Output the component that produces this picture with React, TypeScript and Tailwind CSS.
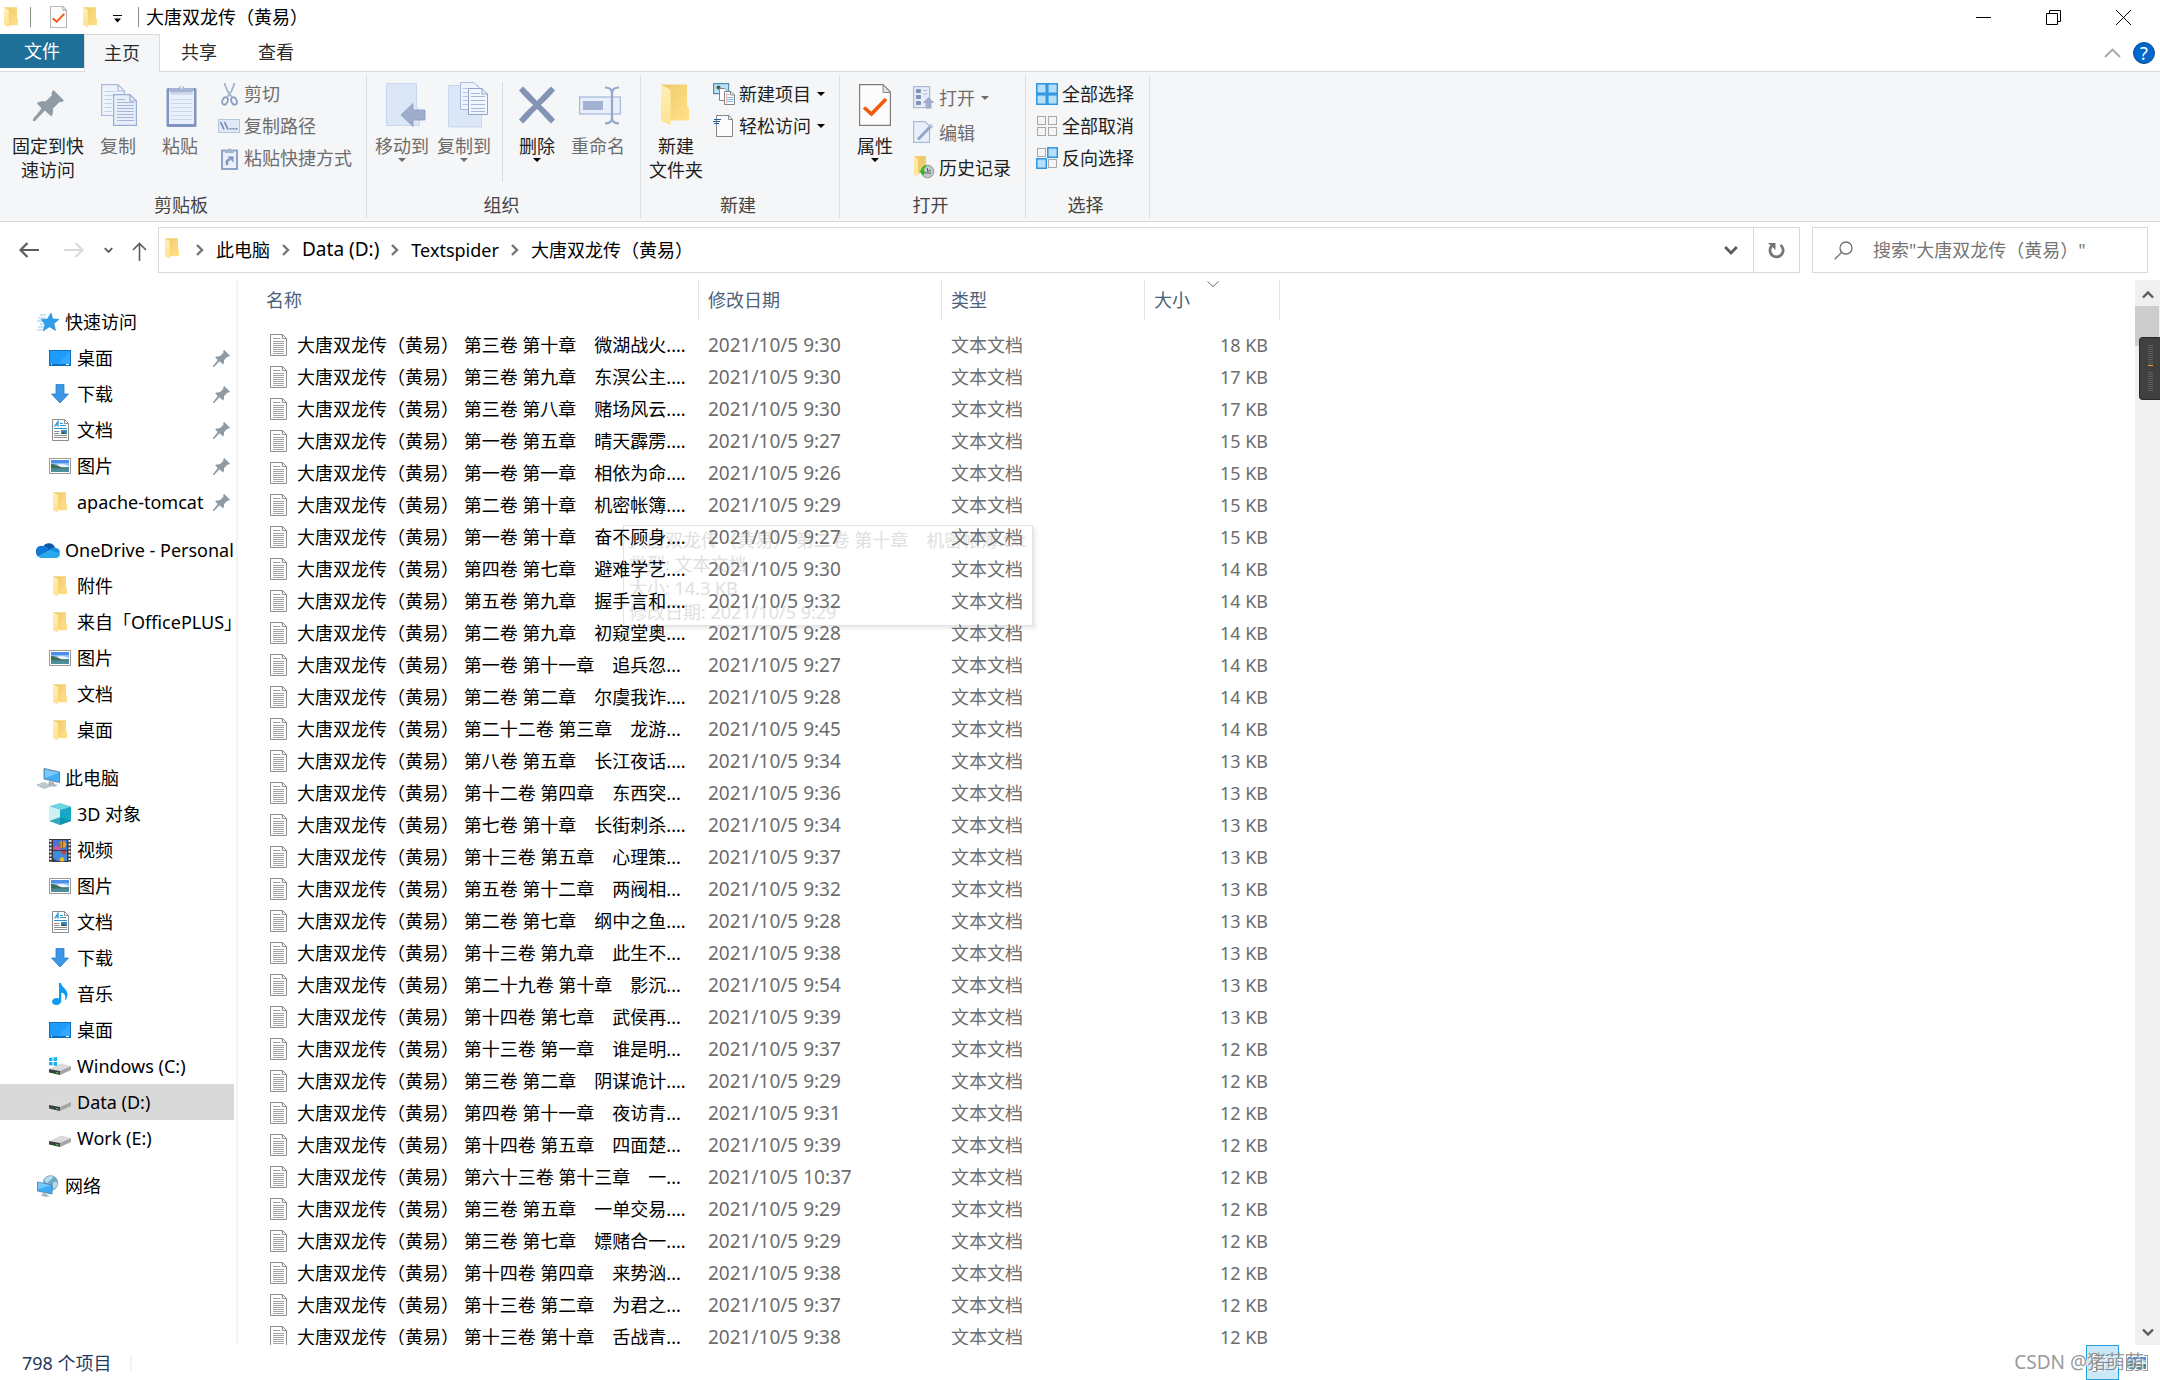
import type { ReactNode } from 'react';

/* ---------- icons ---------- */

function FolderIcon({ className = 'h-[21px] w-[15px]' }: { className?: string }) {
  return (
    <svg viewBox="0 0 15 21" className={className} aria-hidden="true">
      <defs>
        <linearGradient id="folderBack" x1="0" y1="0" x2="1" y2="1">
          <stop offset="0" stopColor="#efc964" />
          <stop offset="1" stopColor="#ffe18c" />
        </linearGradient>
        <linearGradient id="folderFront" x1="0" y1="0" x2="0" y2="1">
          <stop offset="0" stopColor="#fff0b8" />
          <stop offset="1" stopColor="#fde28f" />
        </linearGradient>
      </defs>
      <path d="M0 .3H13V11l1 1v6.2H3z" fill="url(#folderBack)" />
      <path d="M0 .3 4.2 2.6c.5.3.6.5.6 1V20.6L.5 18.6C.1 18.3 0 18 0 17.6z" fill="url(#folderFront)" />
    </svg>
  );
}

function BigFolderIcon() {
  return <FolderIcon className="h-[42px] w-[30px]" />;
}

function PinIcon({ className = 'h-[17px] w-[17px]' }: { className?: string }) {
  return (
    <svg viewBox="0 0 31 31" className={className} fill="#8f9ca5" aria-hidden="true">
      <path d="M20.500 0 31 10.500 28.500 12.300 26.500 12 20 18.500C20.500 21.500 20 24 18.300 26.400L11.900 20.500 2 31 0 31 0 29 8.600 18.400 3.800 13.200C6.500 11.300 9.500 11 12.500 11.600L19 5 18.500 2.500z" />
    </svg>
  );
}

function TextFileIcon() {
  return (
    <svg viewBox="0 0 17 22" className="h-[22px] w-[17px] shrink-0" fill="none" aria-hidden="true">
      <path d="M.5.500H12.500L16.500 4.500V21.500H.5z" fill="#fff" stroke="#8c8c8c" />
      <path d="M12.500.500V4.500H16.500" stroke="#8c8c8c" />
      <path d="M3 4.500H10.500M3 7.500H14M3 9.500H14M3 11.500H14M3 13.500H14M3 15.500H14M3 17.500H14M3 19.500H14" stroke="#a3a3a3" />
    </svg>
  );
}

function CheckDoc({ className }: { className: string }) {
  return (
    <svg viewBox="0 0 32 42" className={className} fill="none" aria-hidden="true">
      <path d="M.6.600H24L31.400 8V41.400H.6z" fill="#fcfcfc" stroke="#7d7d7d" strokeWidth="1.200" />
      <path d="M24 .600V8.500H31.400z" fill="#e3e3e3" stroke="#8a8a8a" />
      <path d="M5 23.500 12.500 30 27 15" stroke="#f2590d" strokeWidth="3.600" />
    </svg>
  );
}

function StarIcon() {
  return (
    <svg viewBox="0 0 22 20" className="h-5 w-[22px]" aria-hidden="true">
      <path d="M3 3H9M1 6H8M0 9H6M3 12H8M1 15H6M0 18H5" stroke="#8fcbf2" strokeWidth="1.200" />
      <path d="M14 1 15.800 7 22 7.300 17 11.500 18.500 18.500 12.500 14.800 6 19 8 12 4.200 7.500 10.500 7z" fill="#2f9fe8" stroke="#2389d0" strokeWidth=".6" />
    </svg>
  );
}

function DesktopIcon() {
  return (
    <svg viewBox="0 0 22 16" className="h-4 w-[22px]" aria-hidden="true">
      <rect x=".5" y=".5" width="21" height="15" fill="#1e9bfb" stroke="#0d72bd" />
      <path d="M21 1 9 14H21z" fill="#33a8ff" />
      <path d="M1 14.500H21" stroke="#0b6cb4" />
      <path d="M2 14.500H3M17 14.500H20" stroke="#fff" />
    </svg>
  );
}

function DownloadIcon() {
  return (
    <svg viewBox="0 0 18 20" className="h-5 w-[18px]" aria-hidden="true">
      <path d="M5 .5H13V10H17.500L9 19 .5 10H5z" fill="#3b97e6" stroke="#2a7cc7" strokeWidth=".8" />
    </svg>
  );
}

function DocumentIcon() {
  return (
    <svg viewBox="0 0 17 22" className="h-[22px] w-[17px]" fill="none" aria-hidden="true">
      <path d="M.5.500H12.500L16.500 4.500V21.500H.5z" fill="#fff" stroke="#8c8c8c" />
      <path d="M12.500.500V4.500H16.500" stroke="#8c8c8c" />
      <path d="M2.500 7.500 6 2.500V7.500M4 6H6" stroke="#2292d8" strokeWidth="1.200" />
      <path d="M8 4.500H11M8 6.500H14M2 9.500H15" stroke="#2292d8" />
      <path d="M2 12.500H7.500M2 14.500H7.500M2 16.500H15M2 18.500H15" stroke="#8f8f8f" />
      <rect x="9" y="11" width="6" height="4" fill="#3e86c2" />
      <path d="M9 15 11 13 15 15z" fill="#2c5a45" />
    </svg>
  );
}

function PictureIcon() {
  return (
    <svg viewBox="0 0 22 16" className="h-4 w-[22px]" aria-hidden="true">
      <rect x=".5" y=".5" width="21" height="15" fill="#fff" stroke="#9a9a9a" />
      <rect x="2" y="2" width="18" height="12" fill="#8fc0f2" />
      <rect x="2" y="2" width="18" height="3" fill="#4c8ee8" />
      <path d="M8 7C12 5 15 6 20 8V9H8z" fill="#eef5fb" />
      <path d="M2 6C6 6 9 8 13 9.500L20 9.200V11H2z" fill="#3c6e58" />
      <rect x="2" y="10.500" width="18" height="3.500" fill="#4f8f9c" />
    </svg>
  );
}

function CloudIcon() {
  return (
    <svg viewBox="0 0 24 16" className="h-4 w-6" aria-hidden="true">
      <path d="M7 5A6.500 6.500 0 0 1 19 5.500L13 9z" fill="#0c59a4" />
      <path d="M7.500 4.200A5.500 5.500 0 0 0 0 10.500 5 5 0 0 0 2 14.500L14 8.500C12 5.500 10 4 7.500 4.200z" fill="#0f78d4" />
      <path d="M13.500 8C15.500 5.500 18 5 20 6A5 5 0 0 1 24 10.500L20 12z" fill="#1490df" />
      <path d="M2 14.500 13.500 8 24 11.500A4.300 4.300 0 0 1 19.500 16H5.500C4 16 2.700 15.400 2 14.500z" fill="#28a8ea" />
    </svg>
  );
}

function ComputerIcon() {
  return (
    <svg viewBox="0 0 23 21" className="h-[21px] w-[23px]" aria-hidden="true">
      <path d="M7 .5 22.500 4V14.500L7 11z" fill="#42aef5" stroke="#5c7e97" strokeWidth=".9" />
      <path d="M8 1.500 22 4.800 8 10z" fill="#7cc8fa" />
      <path d="M12 13 17 14V16L21 17 17 19 11 17z" fill="#aab8c2" />
      <path d="M0 17 7 14.500 14 18 7 20.500z" fill="#d3d9dd" stroke="#97a5ae" strokeWidth=".7" />
      <path d="M3 17 9 19M5.500 16 11 18.500" stroke="#97a5ae" strokeWidth=".6" />
    </svg>
  );
}

function CubeIcon() {
  return (
    <svg viewBox="0 0 22 22" className="h-[22px] w-[22px]" aria-hidden="true">
      <path d="M11 0 22 3.500 11 7 0 3.500z" fill="#6fd3df" />
      <path d="M0 3.500 11 7V22L0 18z" fill="#b4eaf0" />
      <path d="M22 3.500 11 7V22L22 18z" fill="#16a7c4" />
      <path d="M11 14 22 18 11 22 0 18z" fill="#0c8fa8" opacity=".75" />
      <path d="M0 3.500 11 7V14L0 18z" fill="#d6f4f6" opacity=".75" />
    </svg>
  );
}

function VideoIcon() {
  return (
    <svg viewBox="0 0 22 23" className="h-[23px] w-[22px]" aria-hidden="true">
      <rect width="22" height="23" fill="#3a3a3a" />
      <path d="M1.500 1V23M20.500 1V23" stroke="#f2f2f2" strokeWidth="2" strokeDasharray="2 1.600" />
      <rect x="4" y="1" width="14" height="10" fill="#4774d8" />
      <rect x="4" y="12" width="14" height="10" fill="#3f8be0" />
      <path d="M4 10 7 6 10 8 12 11H4z" fill="#d6559a" />
      <circle cx="13.500" cy="5.500" r="3.500" fill="#f0a21a" />
      <path d="M13.500 2V9.500M11 3.500V8" stroke="#8c5a14" strokeWidth="1.200" />
      <path d="M12.500 12H17.500C17.500 14 16 15 15 16 14 15 12.500 14 12.500 12z" fill="#d63a2a" />
      <circle cx="13" cy="20.500" r="2.300" fill="#f3b81b" />
      <path d="M4 19 8 22H4z" fill="#263d92" />
    </svg>
  );
}

function MusicIcon() {
  return (
    <svg viewBox="0 0 16 22" className="h-[22px] w-4" aria-hidden="true">
      <path d="M7 0H9C9.500 4 15.500 6 15.500 11.500 15.500 14 14.500 16 13 17.500 14 13 13 10.500 9.300 9.500V18C9.300 20.300 7 22 4.300 22 1.800 22 0 20.800 0 18.800 0 16.600 2.200 15 4.800 15 5.700 15 6.400 15.200 7 15.500z" fill="#109af0" />
    </svg>
  );
}

function DriveIcon({ windows = false }: { windows?: boolean }) {
  return (
    <svg viewBox="0 0 22 18" className="h-[18px] w-[22px]" aria-hidden="true">
      <path d="M0 12 12 6.500 22 9 11 14z" fill="#d9dadb" />
      <path d="M0 12 11 14V18L0 15.500z" fill="#3d3f40" />
      <path d="M11 14 22 9V13L11 18z" fill="#a3a5a6" />
      <path d="M7 15 9.500 15.600V16.600L7 16z" fill="#3fd13a" />
      {windows && <path d="M0 1 3.500.6V4H0zM4.500.4 8 0V4H4.500zM0 5H3.500V8.400L0 8zM4.500 5H8V9L4.500 8.500z" fill="#14b1f0" />}
    </svg>
  );
}

function NetworkIcon() {
  return (
    <svg viewBox="0 0 22 22" className="h-[22px] w-[22px]" aria-hidden="true">
      <circle cx="13.500" cy="8" r="7.700" fill="#6fa9c8" />
      <path d="M8 4C10 1 15 0 16 2 15 5 12 5 11 8 9 8 7 6 8 4zM17 7C20 6 21 8 20 11L17 14C15 12 15 9 17 7z" fill="#b7dbea" />
      <path d="M.5 7 15 10V19L.5 16z" fill="#3eaaf4" stroke="#4e7f9f" strokeWidth=".8" />
      <path d="M1 7.500 14 10.300 1 14z" fill="#78c6fa" />
      <path d="M6 18 10 19V20L13 21 9 22 4 20.500z" fill="#a9b7c0" />
    </svg>
  );
}

function CopyPages() {
  return (
    <svg viewBox="0 0 36 42" className="ml-0.5 h-[42px] w-9" fill="none" aria-hidden="true">
      <path d="M.6.600H17L23.500 7V31.500H.6z" fill="#eef3fc" stroke="#a9bbdc" strokeWidth="1.200" />
      <path d="M17 .600V7H23.500" stroke="#a9bbdc" strokeWidth="1.200" />
      <path d="M3.500 7.500H15M3.500 11.500H12M3.500 15.500H11M3.500 19.500H11M3.500 23.500H11M3.500 27.500H11" stroke="#c6d4ec" strokeWidth="1.200" />
      <path d="M12.600 10.600H29L35.400 17V41.400H12.600z" fill="#e8effa" stroke="#98add2" strokeWidth="1.200" />
      <path d="M29 10.600V17H35.400" stroke="#98add2" strokeWidth="1.200" />
      <path d="M16 15.500H24M16 18.500H33M16 21.500H33M16 24.500H33M16 27.500H33M16 30.500H33M16 33.500H33M16 36.500H33" stroke="#a5b7d7" strokeWidth="1" />
    </svg>
  );
}

function ClipboardBig() {
  return (
    <svg viewBox="0 0 31 43" className="ml-0.5 h-[43px] w-[31px]" fill="none" aria-hidden="true">
      <rect x=".5" y="4" width="30" height="39" rx="1.500" fill="#8195c0" />
      <rect x="3" y="7" width="25" height="33" fill="#e9f0fb" />
      <path d="M5 15.500H26M5 19.500H26M5 23.500H26M5 27.500H26M5 31.500H26M5 35.500H26" stroke="#cbd8ec" strokeWidth="1.200" />
      <path d="M3 7 6 8.500H25L28 7V4H18.500A3.200 3.200 0 0 0 12.500 4H3z" fill="#a4b4d2" />
      <path d="M4 9 7 10H24L27 9" stroke="#b9c6de" />
      <circle cx="15.500" cy="3.500" r="1.200" fill="#eef2fa" />
    </svg>
  );
}

function ScissorsIcon() {
  return (
    <svg viewBox="0 0 17 24" className="h-6 w-[17px]" fill="none" aria-hidden="true">
      <path d="M3.500 1C5 7 7 11 11 15M13.500 1C12 7 10 11 6 15" stroke="#a5b4cf" strokeWidth="1.800" />
      <ellipse cx="4" cy="19" rx="2.600" ry="3.800" stroke="#8a9dc2" strokeWidth="1.800" transform="rotate(24 4 19)" />
      <ellipse cx="13" cy="19" rx="2.600" ry="3.800" stroke="#8a9dc2" strokeWidth="1.800" transform="rotate(-24 13 19)" />
    </svg>
  );
}

function CopyPathIcon() {
  return (
    <svg viewBox="0 0 22 14" className="h-3.5 w-[22px]" fill="none" aria-hidden="true">
      <rect x=".5" y=".5" width="21" height="13" fill="#dfe8f6" stroke="#b6c5df" />
      <path d="M2.500 3 6 10.500M6.500 3 10 10.500" stroke="#6f87b5" strokeWidth="1.600" />
      <path d="M11.500 9.800H13.500M14.500 9.800H16.500M17.500 9.800H19.500" stroke="#6f87b5" strokeWidth="1.600" />
    </svg>
  );
}

function PasteShortcutIcon() {
  return (
    <svg viewBox="0 0 17 23" className="h-[23px] w-[17px]" fill="none" aria-hidden="true">
      <rect x="1" y="3.500" width="15" height="18.500" fill="#e9f0fb" stroke="#8499c3" strokeWidth="1.800" />
      <path d="M4 6V3.500L7 2.500A1.600 1.600 0 0 1 10 2.500L13 3.500V6z" fill="#a4b4d2" />
      <path d="M6.500 18C4.800 15 6 12.800 9 12.500" stroke="#7f94bf" strokeWidth="2.600" />
      <path d="M6.500 9.500H12.500V15.500z" fill="#7f94bf" />
    </svg>
  );
}

function MoveToIcon() {
  return (
    <svg viewBox="0 0 40 44" className="ml-2 h-11 w-10" fill="none" aria-hidden="true">
      <path d="M.5.500H30.500V24.500L33.500 27V42.500H.5z" fill="#dbe6f6" stroke="#c8d7ee" />
      <path d="M15 32 27 20.500V27H39V37H27V43.500z" fill="#9dadcb" stroke="#8a9cc0" strokeWidth=".8" />
    </svg>
  );
}

function CopyToIcon() {
  return (
    <svg viewBox="0 0 41 46" className="ml-2 h-[46px] w-[41px]" fill="none" aria-hidden="true">
      <path d="M.5 3.500H30.500V27.500L33.500 30V45H.5z" fill="#dbe6f6" stroke="#c8d7ee" />
      <path d="M12.500.500H26L31 5.500V27.500H12.500z" fill="#eef3fc" stroke="#a9bbdc" />
      <path d="M14.500 6.500H26M14.500 10.500H20M14.500 14.500H20M14.500 18.500H20M14.500 22.500H20" stroke="#b9c9e5" />
      <path d="M20.500 6.500H34L39.500 12V32.500H20.500z" fill="#f1f5fd" stroke="#8ea4ca" />
      <path d="M34 6.500V12H39.500" stroke="#8ea4ca" />
      <path d="M23 11.500H32M23 14.500H37M23 18.500H37M23 22.500H37M23 26.500H37M23 29.500H37" stroke="#a5b7d7" />
    </svg>
  );
}

function DeleteIcon() {
  return (
    <svg viewBox="0 0 38 38" className="h-[38px] w-[38px]" fill="none" aria-hidden="true">
      <path d="M1 4.500 5 .5C10 5 14 10 19 15 24 10 28 5 33 .5L37 4.500C32.500 9.500 28 14.500 22.800 19 28 23.500 32.500 28.500 37 33.500L33 37.500C28 33 24 27.500 19 23 14 27.500 10 33 5 37.500L1 33.500C5.500 28.500 10 23.500 15.200 19 10 14.500 5.500 9.500 1 4.500z" fill="#8293b5" />
    </svg>
  );
}

function RenameIcon() {
  return (
    <svg viewBox="0 0 42 39" className="ml-1 h-[39px] w-[42px]" fill="none" aria-hidden="true">
      <rect x=".6" y="11" width="40.800" height="17" fill="#e8effb" stroke="#a4b7db" strokeWidth="1.200" />
      <rect x="4" y="15" width="20" height="9" fill="#a2b2d1" />
      <path d="M26 1.500C30 1.500 33 3.500 33 7V32C33 35.500 30 37.500 26 37.500M40 1.500C36 1.500 33 3.500 33 7M33 32C33 35.500 36 37.500 40 37.500" stroke="#93a5c8" strokeWidth="2.200" />
    </svg>
  );
}

function NewItemIcon() {
  return (
    <svg viewBox="0 0 22 22" className="h-[22px] w-[22px]" fill="none" aria-hidden="true">
      <rect x=".6" y=".6" width="15" height="10" fill="#bfe0f4" stroke="#4b92b5" strokeWidth="1.200" />
      <circle cx="5.500" cy="4.500" r="2" fill="#35604b" />
      <path d="M6.500 5.500H12L15 8.500V17.500H6.500z" fill="#fff" stroke="#858585" />
      <path d="M11.500 8.500H18L21.500 12V21.500H11.500z" fill="#fff" stroke="#858585" />
      <path d="M17.500 8.500V12H21.500" stroke="#858585" />
      <path d="M14 11.500H16M14 14.500H20M14 16.500H20M14 18.500H20" stroke="#7fb8ea" />
      <path d="M13.500 10V20.500" stroke="#f2b5b5" />
    </svg>
  );
}

function EasyAccessIcon() {
  return (
    <svg viewBox="0 0 22 22" className="h-[22px] w-[22px]" fill="none" aria-hidden="true">
      <path d="M3.500.500H16L19.500 4.500V21.500H3.500z" fill="#fbfbfb" stroke="#858585" />
      <path d="M15.500.500V4.500H19.500" stroke="#858585" />
      <path d="M1 4.500H8M0 6.500H7M1 8.500H6" stroke="#1d62a8" strokeWidth="1.200" />
    </svg>
  );
}

function OpenIcon() {
  return (
    <svg viewBox="0 0 22 23" className="h-[23px] w-[22px]" fill="none" aria-hidden="true">
      <rect x=".6" y=".6" width="16" height="21" fill="#e6edf9" stroke="#a8b9da" strokeWidth="1.200" />
      <path d="M3.500 3.500H7.500V6.500H3.500zM3.500 9.500H7.500V12.500H3.500zM3.500 15.500H7.500V18.500H3.500z" fill="#7f92ba" stroke="#7f92ba" />
      <path d="M10 4.500H14M10 8H14" stroke="#a8b9da" />
      <path d="M15.500 11 21.500 17H18.500V22.500H12.500V17H9.500z" fill="#9eafcd" />
    </svg>
  );
}

function EditIcon() {
  return (
    <svg viewBox="0 0 22 23" className="h-[23px] w-[22px]" fill="none" aria-hidden="true">
      <path d="M.6.600H12L16.500 5V21.400H.6z" fill="#eaf0fb" stroke="#a8b9da" strokeWidth="1.200" />
      <path d="M5 18.500 17.500 5.500" stroke="#93a6ca" strokeWidth="3" />
      <path d="M16.500 3.500 19.500 6.500" stroke="#b7c4de" strokeWidth="2.500" />
    </svg>
  );
}

function HistoryIcon() {
  return (
    <svg viewBox="0 0 22 23" className="h-[23px] w-[22px]" fill="none" aria-hidden="true">
      <path d="M1 0H13V16L4 18z" fill="#f0cb6a" />
      <path d="M1 0 5 3V21L1 19z" fill="#ffe9a3" />
      <circle cx="14.500" cy="15.500" r="6.300" fill="#c5c9c9" stroke="#8f9494" />
      <path d="M14.500 12V15.500L18 14M11 17H18" stroke="#5e6464" />
      <path d="M15 9.500C10.500 9 8.500 11.500 8.500 14.500H6L10.500 19.500 12 15H10.800C10.800 12.500 12 10.800 15 9.500z" fill="#29b82c" />
    </svg>
  );
}

function SelectGridIcon({ on }: { on: boolean[] }) {
  const cells = [
    [1, 1],
    [12, 1],
    [1, 12],
    [12, 12],
  ];
  return (
    <svg viewBox="0 0 22 22" className="h-[22px] w-[22px]" aria-hidden="true">
      {cells.map(([x, y], i) => (
        <rect
          key={i}
          x={on[i] ? x - 0.2 : x + 0.5}
          y={on[i] ? y - 0.2 : y + 0.5}
          width={on[i] ? 9.5 : 8}
          height={on[i] ? 9.5 : 8}
          fill={on[i] ? '#b5defa' : '#f5f5f5'}
          stroke={on[i] ? '#2e94de' : '#a9a9a9'}
          strokeWidth={on[i] ? 1.5 : 1}
        />
      ))}
    </svg>
  );
}

function Caret({ muted = false }: { muted?: boolean }) {
  return (
    <svg viewBox="0 0 8 4" className="h-1 w-2" fill={muted ? '#6d6d6d' : '#000'} aria-hidden="true">
      <path d="M0 0H8L4 4z" />
    </svg>
  );
}

function Crumb() {
  return (
    <svg viewBox="0 0 8 12" className="h-3 w-2 shrink-0" fill="none" aria-hidden="true">
      <path d="M1 1 6 6 1 11" stroke="#757575" strokeWidth="2.400" />
    </svg>
  );
}

function Chevron({ up = false, color = '#5a5a5a', className = 'h-2 w-3' }: { up?: boolean; color?: string; className?: string }) {
  return (
    <svg viewBox="0 0 12 8" className={className} fill="none" aria-hidden="true">
      <path d={up ? 'M1 6.500 6 1.500 11 6.500' : 'M1 1.500 6 6.500 11 1.500'} stroke={color} strokeWidth="2.400" />
    </svg>
  );
}

/* ---------- ribbon ---------- */

function BigButton({ icon, label, width, muted = false, caret = false }: { icon: ReactNode; label: string[]; width: string; muted?: boolean; caret?: boolean }) {
  return (
    <button type="button" className={`flex flex-col items-center pt-[11px] ${width} ${muted ? 'text-[#6d6d6d]' : 'text-[#1e1e1e]'}`}>
      <span className="flex h-11 items-center justify-center">{icon}</span>
      <span className="mt-[7px] flex flex-col whitespace-nowrap leading-6">
        {label.map((line) => (
          <span key={line}>{line}</span>
        ))}
      </span>
      {caret && <Caret muted={muted} />}
    </button>
  );
}

function SmallButton({ icon, label, height = 'h-8', muted = false, caret = false }: { icon: ReactNode; label: string; height?: string; muted?: boolean; caret?: boolean }) {
  return (
    <button type="button" className={`flex items-center gap-1 whitespace-nowrap ${height} ${muted ? 'text-[#6d6d6d]' : 'text-[#1e1e1e]'}`}>
      <span className="flex w-[22px] justify-center">{icon}</span>
      <span>{label}</span>
      {caret && (
        <span className="ml-0.5">
          <Caret muted={muted} />
        </span>
      )}
    </button>
  );
}

function Group({ title, width, inset = 'pl-1', children }: { title: string; width: string; inset?: string; children: ReactNode }) {
  return (
    <section aria-label={title} className={`my-[3px] flex shrink-0 flex-col border-r border-[#dcdfe2] ${width}`}>
      <div className={`-mt-[3px] flex flex-1 items-start ${inset}`}>{children}</div>
      <div className="pb-px pr-1 text-center leading-6 text-[#444]">{title}</div>
    </section>
  );
}

function Ribbon() {
  return (
    <div className="flex h-[150px] shrink-0 border-b border-[#d9dbdd] bg-[#f5f6f8]">
      <Group title="剪贴板" width="w-[367px]" inset="pl-3">
        <BigButton icon={<PinIcon className="h-[31px] w-[31px]" />} label={['固定到快', '速访问']} width="w-[72px] text-center" />
        <BigButton icon={<CopyPages />} label={['复制']} width="ml-1 w-[60px]" muted />
        <BigButton icon={<ClipboardBig />} label={['粘贴']} width="w-16" muted />
        <div className="ml-1.5 flex flex-col pt-1.5">
          <SmallButton icon={<ScissorsIcon />} label="剪切" muted />
          <SmallButton icon={<CopyPathIcon />} label="复制路径" muted />
          <SmallButton icon={<PasteShortcutIcon />} label="粘贴快捷方式" muted />
        </div>
      </Group>
      <Group title="组织" width="w-[274px]">
        <BigButton icon={<MoveToIcon />} label={['移动到']} width="w-[62px]" muted caret />
        <BigButton icon={<CopyToIcon />} label={['复制到']} width="w-[62px]" muted caret />
        <div className="ml-[7px] mt-2.5 h-[100px] w-px bg-[#d8dade]" />
        <BigButton icon={<DeleteIcon />} label={['删除']} width="ml-1 w-[60px]" caret />
        <BigButton icon={<RenameIcon />} label={['重命名']} width="w-[62px]" muted />
      </Group>
      <Group title="新建" width="w-[199px]">
        <BigButton icon={<BigFolderIcon />} label={['新建', '文件夹']} width="w-[62px] text-center" />
        <div className="ml-1.5 flex flex-col pt-1.5">
          <SmallButton icon={<NewItemIcon />} label="新建项目" caret />
          <SmallButton icon={<EasyAccessIcon />} label="轻松访问" caret />
        </div>
      </Group>
      <Group title="打开" width="w-[186px]">
        <BigButton icon={<CheckDoc className="h-[42px] w-8" />} label={['属性']} width="w-[62px]" caret />
        <div className="ml-[7px] flex flex-col pt-2">
          <SmallButton icon={<OpenIcon />} label="打开" height="h-[35px]" muted caret />
          <SmallButton icon={<EditIcon />} label="编辑" height="h-[35px]" muted />
          <SmallButton icon={<HistoryIcon />} label="历史记录" height="h-[35px]" />
        </div>
      </Group>
      <Group title="选择" width="w-[124px]" inset="pl-2.5">
        <div className="flex flex-col pt-1.5">
          <SmallButton icon={<SelectGridIcon on={[true, true, true, true]} />} label="全部选择" />
          <SmallButton icon={<SelectGridIcon on={[false, false, false, false]} />} label="全部取消" />
          <SmallButton icon={<SelectGridIcon on={[false, true, true, false]} />} label="反向选择" />
        </div>
      </Group>
    </div>
  );
}

/* ---------- title bar, tabs, address bar ---------- */

function TitleBar() {
  return (
    <header className="flex h-[34px] shrink-0 items-center justify-between">
      <div className="flex h-full items-center">
        <span className="ml-1">
          <FolderIcon />
        </span>
        <span className="ml-[11px] h-5 w-px bg-[#8c8c8c]" />
        <button type="button" aria-label="属性" className="ml-[19px]">
          <CheckDoc className="h-[22px] w-[17px]" />
        </button>
        <button type="button" aria-label="新建文件夹" className="ml-4">
          <FolderIcon />
        </button>
        <button type="button" aria-label="自定义快速访问工具栏" className="ml-[15px]">
          <svg viewBox="0 0 9 8" className="mt-1 h-2 w-[9px]" aria-hidden="true">
            <path d="M0 .5H9" stroke="#000" />
            <path d="M1 3.500H8L4.500 7.500z" />
          </svg>
        </button>
        <span className="ml-4 h-5 w-px bg-[#8c8c8c]" />
        <h1 className="ml-[7px] whitespace-nowrap">大唐双龙传（黄易）</h1>
      </div>
      <div className="flex h-full pr-0.5">
        <button type="button" aria-label="最小化" className="flex w-[70px] items-center justify-center">
          <span className="h-px w-[15px] bg-black" />
        </button>
        <button type="button" aria-label="向下还原" className="flex w-[70px] items-center justify-center">
          <svg viewBox="0 0 15 15" className="h-[15px] w-[15px]" fill="none" stroke="#000" aria-hidden="true">
            <path d="M.5 3.500H11.500V14.500H.5zM3.500 3V.500H14.500V11.500H12" />
          </svg>
        </button>
        <button type="button" aria-label="关闭" className="flex w-[70px] items-center justify-center">
          <svg viewBox="0 0 15 15" className="h-[15px] w-[15px]" stroke="#000" aria-hidden="true">
            <path d="M0 0 15 15M15 0 0 15" />
          </svg>
        </button>
      </div>
    </header>
  );
}

function TabStrip() {
  return (
    <nav className="flex h-[38px] shrink-0 justify-between border-b border-[#d9dbdd]">
      <div className="flex text-[#2b2b2b]">
        <button type="button" className="h-[34px] w-[84px] bg-[#1e7099] text-white">
          文件
        </button>
        <button type="button" className="-mb-px w-[76px] border border-b-0 border-[#d9dbdd] bg-[#f5f6f8] pb-0.5">
          主页
        </button>
        <button type="button" className="w-[78px] pb-px">
          共享
        </button>
        <button type="button" className="w-[76px] pb-px">
          查看
        </button>
      </div>
      <div className="flex items-center gap-3 pr-[5px]">
        <button type="button" aria-label="最小化功能区">
          <svg viewBox="0 0 17 10" className="h-2.5 w-[17px]" fill="none" stroke="#a6a6a6" strokeWidth="1.800" aria-hidden="true">
            <path d="M1 9 8.500 1.500 16 9" />
          </svg>
        </button>
        <button type="button" aria-label="帮助" className="flex h-[22px] w-[22px] items-center justify-center rounded-full border border-[#0a4f94] bg-[#0067cc] text-lg leading-none text-white">
          ?
        </button>
      </div>
    </nav>
  );
}

const crumbs = [
  { name: '此电脑', size: 'text-lg' },
  { name: 'Data (D:)', size: 'text-[19px]' },
  { name: 'Textspider', size: 'text-lg' },
  { name: '大唐双龙传（黄易）', size: 'text-lg' },
];

function AddressRow() {
  return (
    <div className="flex h-[58px] shrink-0 items-start pr-3 pt-[5px]">
      <div className="flex h-[46px] w-[158px] shrink-0 items-center pl-[19px]">
        <button type="button" aria-label="返回">
          <svg viewBox="0 0 20 16" className="h-4 w-5" fill="none" stroke="#5c5c5c" strokeWidth="2.200" aria-hidden="true">
            <path d="M20 8H2M8.500 1 1.500 8 8.500 15" />
          </svg>
        </button>
        <button type="button" aria-label="前进" className="ml-[25px]">
          <svg viewBox="0 0 20 16" className="h-4 w-5" fill="none" stroke="#dadada" strokeWidth="2.200" aria-hidden="true">
            <path d="M0 8H18M11.500 1 18.500 8 11.500 15" />
          </svg>
        </button>
        <button type="button" aria-label="最近浏览的位置" className="ml-5">
          <Chevron className="h-1.5 w-[9px]" />
        </button>
        <button type="button" aria-label="上移" className="ml-[19px]">
          <svg viewBox="0 0 15 19" className="mt-0.5 h-[19px] w-[15px]" fill="none" stroke="#5c5c5c" strokeWidth="1.600" aria-hidden="true">
            <path d="M7.500 19V1.500M1 8 7.500 1.500 14 8" />
          </svg>
        </button>
      </div>
      <div className="flex h-[46px] min-w-0 flex-1 border border-[#d9d9d9]">
        <div className="flex min-w-0 flex-1 items-center pl-1.5">
          <span className="-mt-1">
            <FolderIcon />
          </span>
          {crumbs.map((crumb) => (
            <span key={crumb.name} className="flex items-center gap-3 pl-3">
              <span className="ml-1">
                <Crumb />
              </span>
              <button type="button" className={`-mr-1 whitespace-nowrap ${crumb.size}`}>
                {crumb.name}
              </button>
            </span>
          ))}
        </div>
        <button type="button" aria-label="以前的位置" className="flex w-11 items-center justify-center">
          <Chevron className="h-2.5 w-3.5" />
        </button>
        <button type="button" aria-label="刷新" className="flex w-[46px] items-center justify-center border-l border-[#d9d9d9]">
          <svg viewBox="0 0 17 17" className="h-[17px] w-[17px]" fill="none" aria-hidden="true">
            <path d="M12.500 3A6.600 6.600 0 1 1 3.500 4" stroke="#757575" strokeWidth="2.800" />
            <path d="M0 1H7.500V8z" fill="#757575" />
          </svg>
        </button>
      </div>
      <label className="ml-3 flex h-[46px] w-[336px] shrink-0 items-center border border-[#d9d9d9] pl-[21px]">
        <svg viewBox="0 0 19 19" className="h-[19px] w-[19px] shrink-0" fill="none" stroke="#6f6f6f" strokeWidth="1.300" aria-hidden="true">
          <circle cx="12" cy="7" r="6" />
          <path d="M7.700 11.300.7 18.300" />
        </svg>
        <input type="text" aria-label="搜索" placeholder={'搜索"大唐双龙传（黄易）"'} className="ml-5 min-w-0 flex-1 bg-transparent outline-none placeholder:text-[#757575]" />
      </label>
    </div>
  );
}

/* ---------- navigation pane ---------- */

type NavItem = { name: string; icon: ReactNode; pinned?: boolean; selected?: boolean };

const navGroups: { name: string; icon: ReactNode; items: NavItem[] }[] = [
  {
    name: '快速访问',
    icon: <StarIcon />,
    items: [
      { name: '桌面', icon: <DesktopIcon />, pinned: true },
      { name: '下载', icon: <DownloadIcon />, pinned: true },
      { name: '文档', icon: <DocumentIcon />, pinned: true },
      { name: '图片', icon: <PictureIcon />, pinned: true },
      { name: 'apache-tomcat', icon: <FolderIcon />, pinned: true },
    ],
  },
  {
    name: 'OneDrive - Personal',
    icon: <CloudIcon />,
    items: [
      { name: '附件', icon: <FolderIcon /> },
      { name: '来自「OfficePLUS」', icon: <FolderIcon /> },
      { name: '图片', icon: <PictureIcon /> },
      { name: '文档', icon: <FolderIcon /> },
      { name: '桌面', icon: <FolderIcon /> },
    ],
  },
  {
    name: '此电脑',
    icon: <ComputerIcon />,
    items: [
      { name: '3D 对象', icon: <CubeIcon /> },
      { name: '视频', icon: <VideoIcon /> },
      { name: '图片', icon: <PictureIcon /> },
      { name: '文档', icon: <DocumentIcon /> },
      { name: '下载', icon: <DownloadIcon /> },
      { name: '音乐', icon: <MusicIcon /> },
      { name: '桌面', icon: <DesktopIcon /> },
      { name: 'Windows (C:)', icon: <DriveIcon windows /> },
      { name: 'Data (D:)', icon: <DriveIcon />, selected: true },
      { name: 'Work (E:)', icon: <DriveIcon /> },
    ],
  },
  { name: '网络', icon: <NetworkIcon />, items: [] },
];

function Sidebar() {
  return (
    <aside className="flex w-[238px] shrink-0 flex-col gap-3 overflow-hidden border-r-2 border-[#f4f4f4] pr-0.5 pt-6">
      {navGroups.map((group) => (
        <div key={group.name}>
          <a href="#" className="flex h-9 items-center gap-[5px] overflow-hidden whitespace-nowrap pl-9">
            <span className="flex w-6 shrink-0 justify-center">{group.icon}</span>
            {group.name}
          </a>
          {group.items.map((item) => (
            <a key={item.name} href="#" className={`flex h-9 items-center gap-1.5 whitespace-nowrap pl-[49px] ${item.selected ? 'bg-[#d9d9d9]' : ''}`}>
              <span className="flex w-[22px] shrink-0 justify-center">{item.icon}</span>
              <span className="min-w-0 flex-1">{item.name}</span>
              {item.pinned && (
                <span className="mr-1 shrink-0">
                  <PinIcon />
                </span>
              )}
            </a>
          ))}
        </div>
      ))}
    </aside>
  );
}

/* ---------- file list ---------- */

const files: [string, string, number][] = [
  ['第三卷 第十章　微湖战火....', '9:30', 18],
  ['第三卷 第九章　东溟公主....', '9:30', 17],
  ['第三卷 第八章　赌场风云....', '9:30', 17],
  ['第一卷 第五章　晴天霹雳....', '9:27', 15],
  ['第一卷 第一章　相依为命....', '9:26', 15],
  ['第二卷 第十章　机密帐簿....', '9:29', 15],
  ['第一卷 第十章　奋不顾身....', '9:27', 15],
  ['第四卷 第七章　避难学艺....', '9:30', 14],
  ['第五卷 第九章　握手言和....', '9:32', 14],
  ['第二卷 第九章　初窥堂奥....', '9:28', 14],
  ['第一卷 第十一章　追兵忽...', '9:27', 14],
  ['第二卷 第二章　尔虞我诈....', '9:28', 14],
  ['第二十二卷 第三章　龙游...', '9:45', 14],
  ['第八卷 第五章　长江夜话....', '9:34', 13],
  ['第十二卷 第四章　东西突...', '9:36', 13],
  ['第七卷 第十章　长街刺杀....', '9:34', 13],
  ['第十三卷 第五章　心理策...', '9:37', 13],
  ['第五卷 第十二章　两阀相...', '9:32', 13],
  ['第二卷 第七章　纲中之鱼....', '9:28', 13],
  ['第十三卷 第九章　此生不...', '9:38', 13],
  ['第二十九卷 第十章　影沉...', '9:54', 13],
  ['第十四卷 第七章　武侯再...', '9:39', 13],
  ['第十三卷 第一章　谁是明...', '9:37', 12],
  ['第三卷 第二章　阴谋诡计....', '9:29', 12],
  ['第四卷 第十一章　夜访青...', '9:31', 12],
  ['第十四卷 第五章　四面楚...', '9:39', 12],
  ['第六十三卷 第十三章　一...', '10:37', 12],
  ['第三卷 第五章　一单交易....', '9:29', 12],
  ['第三卷 第七章　嫖赌合一....', '9:29', 12],
  ['第十四卷 第四章　来势汹...', '9:38', 12],
  ['第十三卷 第二章　为君之...', '9:37', 12],
  ['第十三卷 第十章　舌战青...', '9:38', 12],
];

const columns = [
  { name: '名称', pad: 'pl-7' },
  { name: '修改日期', pad: 'pl-[9px]' },
  { name: '类型', pad: 'pl-[9px]' },
  { name: '大小', pad: 'pl-[9px]' },
];

function FileTable() {
  return (
    <table className="relative z-10 w-[1042px] table-fixed border-collapse text-[#6d6d6d]">
      <colgroup>
        <col className="w-[461px]" />
        <col className="w-[243px]" />
        <col className="w-[203px]" />
        <col className="w-[135px]" />
      </colgroup>
      <thead>
        <tr>
          {columns.map((column) => (
            <th key={column.name} scope="col" className="p-0 pb-[9px] text-left font-normal text-[#4c607a]">
              <button type="button" className={`relative flex h-10 w-full items-center border-r border-[#e5e5e5] ${column.pad}`}>
                {column.name}
                {column.name === '大小' && (
                  <svg viewBox="0 0 12 6" className="absolute left-[62px] top-px h-1.5 w-3" fill="none" stroke="#6a6a6a" aria-hidden="true">
                    <path d="M.5.500 6 5.500 11.500.5" />
                  </svg>
                )}
              </button>
            </th>
          ))}
        </tr>
      </thead>
      <tbody>
        {files.map(([name, time, size]) => (
          <tr key={name} className="h-8">
            <td className="p-0 pl-8 text-black">
              <div className="flex h-8 items-center gap-2.5 overflow-hidden whitespace-nowrap">
                <TextFileIcon />
                <span className="whitespace-pre">{'大唐双龙传（黄易） ' + name}</span>
              </div>
            </td>
            <td className="p-0 pl-[9px] text-[19px] leading-7">2021/10/5 {time}</td>
            <td className="p-0 pl-[9px]">文本文档</td>
            <td className="p-0 pr-3 text-right">{size} KB</td>
          </tr>
        ))}
      </tbody>
    </table>
  );
}

function FadingTooltip() {
  return (
    <div role="tooltip" className="absolute left-[385px] top-[245px] h-[101px] w-[410px] whitespace-nowrap border border-[#e2e2e2] pl-[5px] pt-0.5 leading-6 text-[#e0e0e0] shadow-[3px_3px_3px_rgba(0,0,0,0.08)]">
      <div>大唐双龙传（黄易） 第二卷 第十章　机密帐簿.txt</div>
      <div>类型: 文本文档</div>
      <div>大小: 14.3 KB</div>
      <div>修改日期: 2021/10/5 9:29</div>
    </div>
  );
}

function Scrollbar() {
  return (
    <div className="relative flex w-[25px] shrink-0 flex-col bg-[#f0f0f0]">
      <button type="button" aria-label="向上滚动" className="flex h-[26px] items-center justify-center pt-1">
        <Chevron up />
      </button>
      <div className="h-10 w-6 bg-[#cdcdcd]" />
      <button type="button" aria-label="向下滚动" className="mt-auto flex h-[26px] items-center justify-center">
        <Chevron />
      </button>
      <div className="absolute right-0 top-[57px] flex h-[63px] w-[21px] flex-col items-center rounded-l border border-r-0 border-[#2a2a2a] bg-[#404040] pt-[7px]">
        <svg viewBox="0 0 5 47" className="h-[47px] w-[5px]" fill="none" aria-hidden="true">
          <path d="M2.500 0V20M2.500 27V46" stroke="#5e5e5e" strokeWidth="5" strokeDasharray="1 1" />
          <path d="M0 20.500H5" stroke="#f5a31a" />
        </svg>
      </div>
    </div>
  );
}

function StatusBar() {
  return (
    <footer className="relative flex h-[35px] shrink-0 items-center justify-between text-[#1f3a5c]">
      <div className="flex items-center">
        <span className="ml-[22px]">798 个项目</span>
        <span className="ml-[18px] h-4 w-0.5 bg-[#f3f3f3]" />
      </div>
      <div className="flex h-full items-center pr-3">
        <button type="button" aria-label="详细信息" className="flex h-full w-[33px] items-center justify-center border border-[#26a0da] bg-[#cbe8f6]">
          <svg viewBox="0 0 22 20" className="h-5 w-[22px]" fill="none" aria-hidden="true">
            <path d="M.5.500H4.500V4.500H.5zM.5 7.500H4.500V11.500H.5zM.5 14.500H4.500V18.500H.5z" fill="#fff" stroke="#8c8c8c" />
            <path d="M7 2.500H21M7 9.500H21M7 16.500H21" stroke="#6f8595" />
          </svg>
        </button>
        <button type="button" aria-label="大缩略图" className="ml-[7px]">
          <PictureIcon />
        </button>
      </div>
      <span className="absolute bottom-1 right-4 whitespace-nowrap text-[19px] leading-7 text-[#8f8f8f] opacity-90 [text-shadow:1px_1px_0_#fff]">CSDN @猪萌萌</span>
    </footer>
  );
}

export default function App() {
  return (
    <div className="flex h-screen flex-col overflow-hidden bg-white font-['Noto_Sans','Noto_Sans_CJK_SC',sans-serif] text-lg text-black" lang="zh-CN">
      <TitleBar />
      <TabStrip />
      <Ribbon />
      <AddressRow />
      <div className="flex min-h-0 flex-1">
        <Sidebar />
        <main className="relative min-w-0 flex-1 overflow-hidden">
          <FadingTooltip />
          <FileTable />
        </main>
        <Scrollbar />
      </div>
      <StatusBar />
    </div>
  );
}
